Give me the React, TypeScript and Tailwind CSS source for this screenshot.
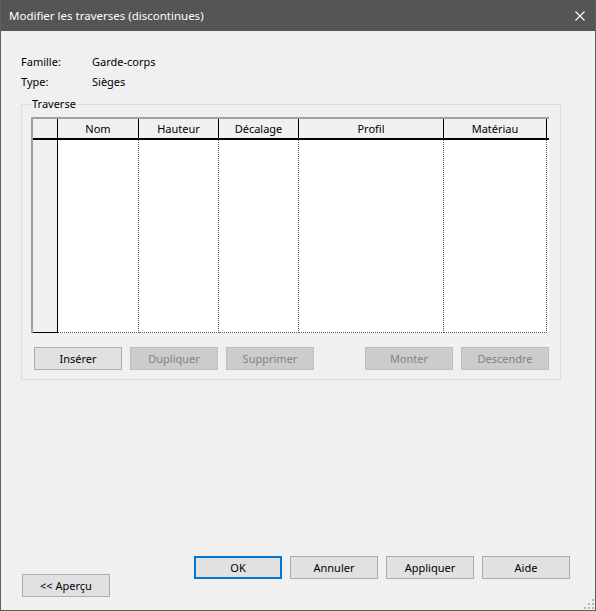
import React from "react";

const font = { fontFamily: '"Noto Sans", "Open Sans", sans-serif' };

function Btn({
  label,
  disabled,
  primary,
}: {
  label: string;
  disabled?: boolean;
  primary?: boolean;
}) {
  const base = "flex h-[23px] w-[88px] items-center justify-center text-[11px] leading-none";
  if (disabled)
    return (
      <button disabled className={`${base} border border-[#bfbfbf] bg-[#cccccc] text-[#838383]`}>
        {label}
      </button>
    );
  if (primary)
    return (
      <button className={`${base} border-2 border-[#0078d7] bg-[#e1e1e1] text-black`}>
        {label}
      </button>
    );
  return (
    <button className={`${base} border border-[#adadad] bg-[#e1e1e1] text-black`}>
      {label}
    </button>
  );
}

const cols = [
  { name: "Nom", w: "w-[81px]" },
  { name: "Hauteur", w: "w-[80px]" },
  { name: "Décalage", w: "w-[80px]" },
  { name: "Profil", w: "w-[145px]" },
  { name: "Matériau", w: "w-[103px]" },
];

function Grid() {
  return (
    <div className="mt-[5px] w-[518px] border-l-2 border-t-2 border-[#a0a0a0] bg-white">
      {/* header */}
      <div className="flex h-[21px] border-b-2 border-black bg-[#f0f0f0]">
        <div className="w-[25px] border-r border-black" />
        {cols.map((c) => (
          <div
            key={c.name}
            className={`${c.w} flex items-center justify-center border-r border-black text-[11px] leading-none`}
          >
            {c.name}
          </div>
        ))}
      </div>
      {/* body */}
      <div className="flex h-[193px]">
        <div className="w-[25px] border-b border-r border-black bg-[#f0f0f0]" />
        {cols.map((c) => (
          <div
            key={c.name}
            className={`${c.w} border-b border-r border-dotted border-[#5a5a5a]`}
          />
        ))}
      </div>
    </div>
  );
}

function Grip() {
  const dots = [
    [8, 0],
    [4, 4],
    [8, 4],
    [0, 8],
    [4, 8],
    [8, 8],
  ];
  return (
    <svg width="10" height="10" className="absolute bottom-[1px] right-[1px]">
      {dots.map(([x, y], i) => (
        <rect key={i} x={x} y={y} width="2" height="2" fill="#b5b5b5" />
      ))}
    </svg>
  );
}

export default function App() {
  return (
    <div
      style={font}
      className="relative flex h-[611px] w-[596px] flex-col border-x border-b border-[#5f5f5f] bg-[#f0f0f0] text-black"
    >
      <div className="flex h-[31px] shrink-0 items-center justify-between bg-[#555555] pl-[8px] pr-[10px] text-[11.5px] text-white">
        <span>Modifier les traverses (discontinues)</span>
        <svg width="10" height="10" viewBox="0 0 10 10">
          <path d="M0.5 0.5 L9.5 9.5 M9.5 0.5 L0.5 9.5" stroke="white" strokeWidth="1.1" />
        </svg>
      </div>

      <div className="flex flex-1 flex-col pl-[20px] pt-[21px]">
        <div className="grid grid-cols-[71px_auto] text-[11px] leading-[20px]">
          <span>Famille:</span>
          <span>Garde-corps</span>
          <span>Type:</span>
          <span>Sièges</span>
        </div>

        <fieldset className="mt-[4px] w-[540px] border border-[#dcdcdc] pb-[9px] pl-[9px]">
          <legend className="px-[1px] text-[11px] leading-[16px]">Traverse</legend>
          <Grid />
          <div className="mt-[14px] flex w-[518px] justify-between pl-[3px]">
            <div className="flex gap-[8px]">
              <Btn label="Insérer" />
              <Btn label="Dupliquer" disabled />
              <Btn label="Supprimer" disabled />
            </div>
            <div className="flex gap-[8px]">
              <Btn label="Monter" disabled />
              <Btn label="Descendre" disabled />
            </div>
          </div>
        </fieldset>

        <div className="mt-auto flex items-end justify-between pb-[13px] pl-[1px] pr-[25px]">
          <Btn label="<< Aperçu" />
          <div className="mb-[18px] flex gap-[8px]">
            <Btn label="OK" primary />
            <Btn label="Annuler" />
            <Btn label="Appliquer" />
            <Btn label="Aide" />
          </div>
        </div>
      </div>
      <Grip />
    </div>
  );
}
